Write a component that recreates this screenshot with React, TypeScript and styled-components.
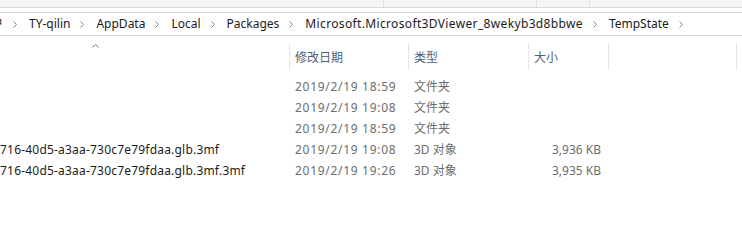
import styled, { createGlobalStyle } from "styled-components";

const GlobalStyle = createGlobalStyle`
  html, body {
    margin: 0;
    padding: 0;
    background: #ffffff;
  }
  body {
    font-family: "Noto Sans", "Noto Sans CJK SC", sans-serif;
    font-size: 12px;
  }
`;

const Window = styled.div`
    width: 742px;
    height: 249px;
    overflow: hidden;
    background: #ffffff;
`;

const Ribbon = styled.div`
    height: 7px;
    display: flex;
    background: #f5f6f7;
    border-bottom: 1px solid #dadbdc;
    overflow: hidden;
`;

const RibbonGroup = styled.div<{ $width?: number }>`
    flex: ${(p) => (p.$width ? `0 0 ${p.$width}px` : "1 1 auto")};
    display: flex;
    border-right: 1px solid #e2e3e4;
    box-sizing: border-box;
    overflow: hidden;

    &:last-child {
        border-right: none;
    }
`;

const RibbonLabel = styled.span<{ $offset: number }>`
    margin-left: ${(p) => p.$offset}px;
    margin-top: -13px;
    line-height: 16px;
    color: #5a5a5a;
    white-space: nowrap;
`;

const AddressArea = styled.div`
    padding-top: 4px;
`;

const AddressBar = styled.div`
    height: 22px;
    display: flex;
    align-items: center;
    border-top: 1px solid #d9d9d9;
    border-bottom: 1px solid #d9d9d9;
    overflow: hidden;
    white-space: nowrap;
    color: #1b1b1b;
`;

const Crumb = styled.span<{ $clip?: number; $spread?: number }>`
    margin-left: ${(p) => (p.$clip ? -p.$clip : 0)}px;
    letter-spacing: ${(p) => p.$spread ?? 0}px;
    line-height: 16px;
`;

const CrumbArrow = styled.span`
    display: flex;
    align-items: center;
    margin: 0 12px 0 10px;
    color: #808080;
`;

const Chevron = () => (
    <CrumbArrow>
        <svg width="4" height="7" viewBox="0 0 4 7">
            <path d="M0.5 0.5 L3.5 3.5 L0.5 6.5" fill="none" stroke="currentColor" strokeWidth="1" />
        </svg>
    </CrumbArrow>
);

const List = styled.div`
    margin-top: 7px;
`;

const columns = "289px 119px 120px 80px 128px 1fr";

const HeaderRow = styled.div`
    height: 27px;
    display: grid;
    grid-template-columns: ${columns};
`;

const HeaderCell = styled.div`
    display: flex;
    align-items: center;
    padding-left: 5px;
    border-left: 1px solid #e5e5e5;
    color: #4c607a;
    white-space: nowrap;
`;

const NameHeader = styled.div`
    display: flex;
    align-items: flex-start;
    padding: 1px 0 0 92px;
    color: #777777;
`;

const Rows = styled.div`
    padding-top: 6px;
`;

const Row = styled.div`
    height: 21px;
    display: grid;
    grid-template-columns: ${columns};
    align-items: center;
`;

const Cell = styled.div<{ $align?: "left" | "right"; $dark?: boolean; $spread?: number }>`
    padding: ${(p) => (p.$align === "right" ? "0 7px 0 0" : "0 0 0 6px")};
    text-align: ${(p) => p.$align ?? "left"};
    color: ${(p) => (p.$dark ? "#1b1b1b" : "#6d6d6d")};
    letter-spacing: ${(p) => p.$spread ?? 0}px;
    white-space: nowrap;
    overflow: hidden;
    line-height: 16px;
`;

const NameCell = styled(Cell)`
    padding: 0;
`;

const crumbs = [
    { label: "TY-qilin", spread: 0 },
    { label: "AppData", spread: 0 },
    { label: "Local", spread: 0 },
    { label: "Packages", spread: 0 },
    { label: "Microsoft.Microsoft3DViewer_8wekyb3d8bbwe", spread: 0.35 },
    { label: "TempState", spread: 0 },
];

const files = [
    { name: "", date: "2019/2/19 18:59", type: "文件夹", size: "" },
    { name: "", date: "2019/2/19 19:08", type: "文件夹", size: "" },
    { name: "", date: "2019/2/19 18:59", type: "文件夹", size: "" },
    { name: "716-40d5-a3aa-730c7e79fdaa.glb.3mf", date: "2019/2/19 19:08", type: "3D 对象", size: "3,936 KB" },
    { name: "716-40d5-a3aa-730c7e79fdaa.glb.3mf.3mf", date: "2019/2/19 19:26", type: "3D 对象", size: "3,935 KB" },
];

export default function App() {
    return (
        <Window>
            <GlobalStyle />
            <Ribbon>
                <RibbonGroup $width={384}>
                    <RibbonLabel $offset={14}>打开</RibbonLabel>
                    <RibbonLabel $offset={212}>全部选</RibbonLabel>
                </RibbonGroup>
                <RibbonGroup $width={153}>
                    <RibbonLabel $offset={47}>反向选择</RibbonLabel>
                </RibbonGroup>
                <RibbonGroup $width={53} />
                <RibbonGroup />
            </Ribbon>
            <AddressArea>
                <AddressBar>
                    <Crumb $clip={9}>户</Crumb>
                    {crumbs.map((c) => (
                        <span key={c.label} style={{ display: "contents" }}>
                            <Chevron />
                            <Crumb $spread={c.spread}>{c.label}</Crumb>
                        </span>
                    ))}
                    <Chevron />
                </AddressBar>
            </AddressArea>
            <List>
                <HeaderRow>
                    <NameHeader>
                        <svg width="7" height="4" viewBox="0 0 7 4">
                            <path d="M0.5 3.5 L3.5 0.5 L6.5 3.5" fill="none" stroke="currentColor" strokeWidth="1" />
                        </svg>
                    </NameHeader>
                    <HeaderCell>修改日期</HeaderCell>
                    <HeaderCell>类型</HeaderCell>
                    <HeaderCell>大小</HeaderCell>
                    <HeaderCell />
                    <HeaderCell />
                </HeaderRow>
                <Rows>
                    {files.map((f, i) => (
                        <Row key={i}>
                            <NameCell $dark $spread={0.2}>{f.name}</NameCell>
                            <Cell $spread={0.7}>{f.date}</Cell>
                            <Cell>{f.type}</Cell>
                            <Cell $align="right">{f.size}</Cell>
                            <Cell />
                            <Cell />
                        </Row>
                    ))}
                </Rows>
            </List>
        </Window>
    );
}
